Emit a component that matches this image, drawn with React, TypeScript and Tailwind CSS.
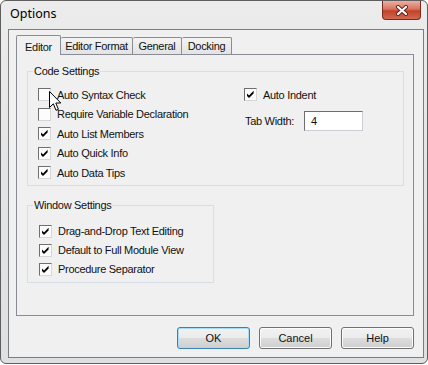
import React from 'react';

const CheckBox: React.FC<{ checked?: boolean }> = ({ checked }) => (
  <span className="flex h-[13px] w-[13px] shrink-0 items-center justify-center border border-t-[#6f6f6f] border-l-[#6f6f6f] border-r-[#d6d6d6] border-b-[#d6d6d6] bg-[#fcfcfc]">
    {checked && (
      <svg width="9" height="9" viewBox="0 0 9 9">
        <path d="M1 3.4 L3 5.4 L7.6 0.8 V3.4 L3 8 L1 6 Z" fill="#000" />
      </svg>
    )}
  </span>
);

const Option: React.FC<{ label: string; checked?: boolean; h?: string }> = ({ label, checked, h = 'h-[19.5px]' }) => (
  <div className={`flex items-center ${h}`}>
    <CheckBox checked={checked} />
    <span className="ml-[6px] whitespace-nowrap">{label}</span>
  </div>
);

const GroupLabel: React.FC<{ text: string }> = ({ text }) => (
  <span className="-mt-[8px] ml-[5px] block h-[14px] w-fit bg-[#f0f0f0] px-[1px] leading-[14px]">{text}</span>
);

const Button: React.FC<{ label: string; focused?: boolean }> = ({ label, focused }) => (
  <button
    className={`flex h-[22px] w-[73px] items-center justify-center rounded-[3px] border bg-[linear-gradient(#f2f2f2_0%,#ebebeb_50%,#dddddd_50%,#cfcfcf_100%)] ${
      focused ? 'border-[#3c7fb1] shadow-[inset_0_0_0_1px_#a9dcf6]' : 'border-[#707070] shadow-[inset_0_0_0_1px_#fcfcfc]'
    }`}
  >
    {label}
  </button>
);

export default function App() {
  return (
    <div className="relative h-[365px] w-[428px] bg-white font-['Liberation_Sans',Arial,sans-serif] text-[11px] tracking-[-0.3px] text-[#111]">
      <div className="flex h-[364px] w-[428px] flex-col rounded-[6px] border border-[#5e5e5e] bg-[linear-gradient(180deg,#ececec_0%,#e4e5e6_40%,#dfe0e1_100%)]">
        {/* title bar */}
        <div className="flex h-[28px] items-start justify-between">
          <span className="mt-[4px] pl-[9px] font-['Noto_Sans',sans-serif] text-[12.5px] tracking-normal text-black">Options</span>
          <div className="mr-[6px] flex h-[19px] w-[39px] items-center justify-center rounded-b-[4px] border border-t-0 border-[#7a2a1c] bg-[linear-gradient(180deg,#eab0a2_0%,#d9735f_45%,#c4412b_55%,#cf6a4f_100%)]">
            <svg width="14" height="11" viewBox="0 0 14 11">
              <path d="M3 2 L11 9 M11 2 L3 9" stroke="#5b2016" strokeWidth="4" strokeLinecap="round" />
              <path d="M3 2 L11 9 M11 2 L3 9" stroke="#fff" strokeWidth="2.2" strokeLinecap="round" />
            </svg>
          </div>
        </div>

        {/* client area */}
        <div className="ml-[7px] flex h-[329px] w-[416px] flex-col border border-[#7d7d7d] bg-[#f0f0f0] pl-[7px] pt-[5px]">
          {/* tabs */}
          <div className="relative z-10 -mb-px flex h-[20px] items-end">
            <div className="flex h-[20px] w-[45px] items-start justify-center rounded-t-[2px] border border-b-0 border-[#898c95] bg-[#f0f0f0] pt-[3px]">Editor</div>
            <div className="mb-px flex h-[17px] w-[72px] items-center justify-center rounded-t-[2px] border border-b-0 border-l-0 border-[#898c95] bg-[linear-gradient(#f3f3f3,#e3e3e3)]">Editor Format</div>
            <div className="mb-px flex h-[17px] w-[49px] items-center justify-center rounded-t-[2px] border border-b-0 border-l-0 border-[#898c95] bg-[linear-gradient(#f3f3f3,#e3e3e3)]">General</div>
            <div className="mb-px flex h-[17px] w-[50px] items-center justify-center rounded-t-[2px] border border-b-0 border-l-0 border-[#898c95] bg-[linear-gradient(#f3f3f3,#e3e3e3)]">Docking</div>
          </div>

          {/* tab panel */}
          <div className="flex h-[262px] w-[398px] flex-col border border-[#898c95] bg-[#f0f0f0] pl-[10px] pt-[16px]">
            <div className="h-[115px] w-[377px] border border-[#d5dfe5]">
              <GroupLabel text="Code Settings" />
              <div className="mt-[7px] flex pl-[10px]">
                <div className="w-[206px]">
                  <Option label="Auto Syntax Check" />
                  <Option label="Require Variable Declaration" />
                  <Option label="Auto List Members" checked />
                  <Option label="Auto Quick Info" checked />
                  <Option label="Auto Data Tips" checked />
                </div>
                <div>
                  <Option label="Auto Indent" checked />
                  <div className="mt-[6.5px] flex h-[20px] items-center">
                    <span className="w-[60px] pl-px">Tab Width:</span>
                    <div className="flex h-[20px] w-[59px] items-center border border-[#c9ccd1] border-t-[#6f6f6f] border-l-[#6f6f6f] bg-white pl-[6px]">4</div>
                  </div>
                </div>
              </div>
            </div>

            <div className="mt-[19px] h-[78px] w-[187px] border border-[#d5dfe5]">
              <GroupLabel text="Window Settings" />
              <div className="mt-[10px] pl-[11px]">
                <Option label="Drag-and-Drop Text Editing" checked h="h-[19px]" />
                <Option label="Default to Full Module View" checked h="h-[19px]" />
                <Option label="Procedure Separator" checked h="h-[19px]" />
              </div>
            </div>
          </div>

          {/* buttons */}
          <div className="mt-[11px] flex w-[398px] justify-end gap-[9px] tracking-normal">
            <Button label="OK" focused />
            <Button label="Cancel" />
            <Button label="Help" />
          </div>
        </div>
      </div>

      {/* mouse pointer */}
      <svg className="absolute left-[49px] top-[91px]" width="13" height="21" viewBox="0 0 13 21">
        <path d="M0.5 0.5 V16.5 L4.3 12.8 L7 19.3 L9.4 18.3 L6.8 12 H11.8 Z" fill="#fff" stroke="#000" strokeWidth="1" strokeLinejoin="round" />
      </svg>
    </div>
  );
}
